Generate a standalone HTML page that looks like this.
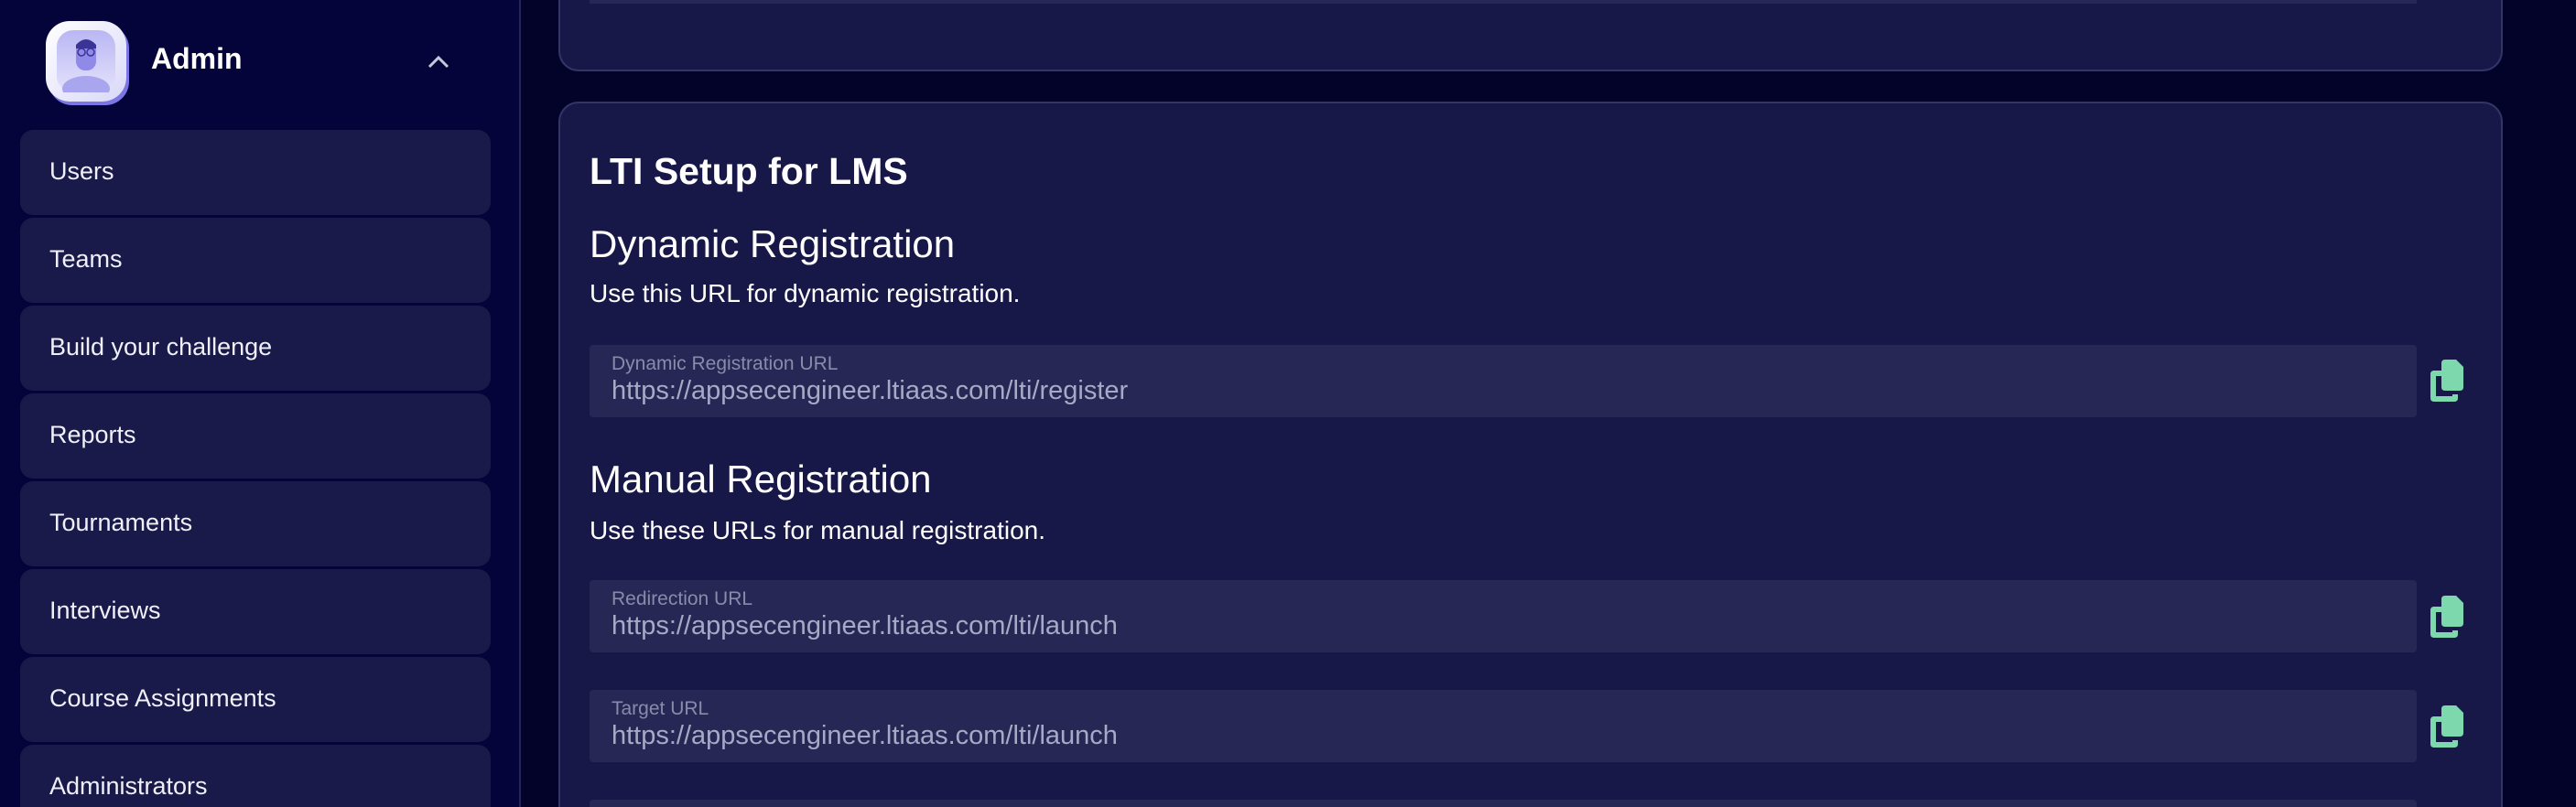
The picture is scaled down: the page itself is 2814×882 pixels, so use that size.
<!DOCTYPE html>
<html><head><meta charset="utf-8"><style>
*{margin:0;padding:0;box-sizing:border-box}
html,body{width:2814px;height:882px;overflow:hidden}
body{background:#03032a;font-family:"Liberation Sans",sans-serif;color:#fff}
#w{position:relative;width:2814px;height:882px;overflow:hidden}
.sb{position:absolute;left:0;top:0;width:569px;height:882px;background:#05043a;border-right:2px solid #25255a;overflow:hidden}
.av{position:absolute;left:50px;top:23px;width:88px;height:88px;border-radius:26px;background:linear-gradient(135deg,#fff,#d8d8f8);box-shadow:3px 4px 0 #7b75e8}
.av .in{position:absolute;left:12px;top:10px;width:64px;height:68px;border-radius:18px;background:linear-gradient(#b9b6f4,#e4e2fb)}
.adm{position:absolute;left:165px;top:46px;font-size:32px;font-weight:bold}
.item{position:absolute;left:22px;width:514px;height:93px;border-radius:14px;background:#19194a;font-size:27px;padding:30px 0 0 32px;color:#f0f0f8}
.card{position:absolute;left:610px;width:2124px;background:#181848;border:2px solid #343468;border-radius:22px}
.t{position:absolute;left:644px;color:#fff}
.inp{position:absolute;left:644px;width:1996px;height:79px;background:#262754;border-radius:4px}
.inp .l{position:absolute;left:24px;top:9px;font-size:21px;color:#8a8bab}
.inp .v{position:absolute;left:24px;top:34px;font-size:29px;color:#a8a9c6}
.cp{position:absolute;left:2655px}
</style></head><body><div id="w">
<div class="sb">
<div class="av"><div class="in"><svg width="64" height="68" viewBox="0 0 64 68"><ellipse cx="32" cy="64" rx="26" ry="14" fill="#a9a5ee"/><rect x="21" y="12" width="22" height="32" rx="10" fill="#8f89e8"/><path d="M21 16 Q32 4 43 16 L43 20 L21 20Z" fill="#3b3494"/><circle cx="27" cy="24" r="4" fill="none" stroke="#3b3494" stroke-width="1.5"/><circle cx="37" cy="24" r="4" fill="none" stroke="#3b3494" stroke-width="1.5"/></svg></div></div>
<div class="adm">Admin</div>
<svg style="position:absolute;left:466px;top:60px" width="26" height="16" viewBox="0 0 26 16"><path d="M3 13 L13 3 L23 13" fill="none" stroke="#c8c8d8" stroke-width="3"/></svg>
<div class="item" style="top:142px">Users</div>
<div class="item" style="top:238px">Teams</div>
<div class="item" style="top:334px">Build your challenge</div>
<div class="item" style="top:430px">Reports</div>
<div class="item" style="top:526px">Tournaments</div>
<div class="item" style="top:622px">Interviews</div>
<div class="item" style="top:718px">Course Assignments</div>
<div class="item" style="top:814px;height:68px;border-radius:14px 14px 0 0">Administrators</div>
</div>
<div class="card" style="top:0;height:78px;border-top:none;border-radius:0 0 22px 22px"></div>
<div class="inp" style="top:0;height:4px;border-radius:0"></div>
<div class="card" style="top:111px;height:771px;border-bottom:none;border-radius:22px 22px 0 0"></div>
<div class="t" style="top:164px;font-size:41px;font-weight:bold">LTI Setup for LMS</div>
<div class="t" style="top:243px;font-size:42px">Dynamic Registration</div>
<div class="t" style="top:305px;font-size:28px">Use this URL for dynamic registration.</div>
<div class="inp" style="top:377px"><div class="l">Dynamic Registration URL</div><div class="v">https://appsecengineer.ltiaas.com/lti/register</div></div>
<div class="t" style="top:500px;font-size:42px">Manual Registration</div>
<div class="t" style="top:564px;font-size:28px">Use these URLs for manual registration.</div>
<div class="inp" style="top:634px"><div class="l">Redirection URL</div><div class="v">https://appsecengineer.ltiaas.com/lti/launch</div></div>
<div class="inp" style="top:754px"><div class="l">Target URL</div><div class="v">https://appsecengineer.ltiaas.com/lti/launch</div></div>
<div class="inp" style="top:874px;height:8px;border-radius:4px 4px 0 0"></div>
<svg class="cp" style="top:391px" width="44" height="50" viewBox="0 0 44 50"><path d="M12 2 H28 L36 10 V32 Q36 36 32 36 H16 Q12 36 12 32 V6 Q12 2 16 2Z" fill="#7dd8ae"/><path d="M12 14 H4 Q0 14 0 18 V44 Q0 48 4 48 H26 Q30 48 30 44 V40 H24 V42 H6 V20 H12Z" fill="#7dd8ae"/></svg>
<svg class="cp" style="top:649px" width="44" height="50" viewBox="0 0 44 50"><path d="M12 2 H28 L36 10 V32 Q36 36 32 36 H16 Q12 36 12 32 V6 Q12 2 16 2Z" fill="#7dd8ae"/><path d="M12 14 H4 Q0 14 0 18 V44 Q0 48 4 48 H26 Q30 48 30 44 V40 H24 V42 H6 V20 H12Z" fill="#7dd8ae"/></svg>
<svg class="cp" style="top:769px" width="44" height="50" viewBox="0 0 44 50"><path d="M12 2 H28 L36 10 V32 Q36 36 32 36 H16 Q12 36 12 32 V6 Q12 2 16 2Z" fill="#7dd8ae"/><path d="M12 14 H4 Q0 14 0 18 V44 Q0 48 4 48 H26 Q30 48 30 44 V40 H24 V42 H6 V20 H12Z" fill="#7dd8ae"/></svg>
</div></body></html>
